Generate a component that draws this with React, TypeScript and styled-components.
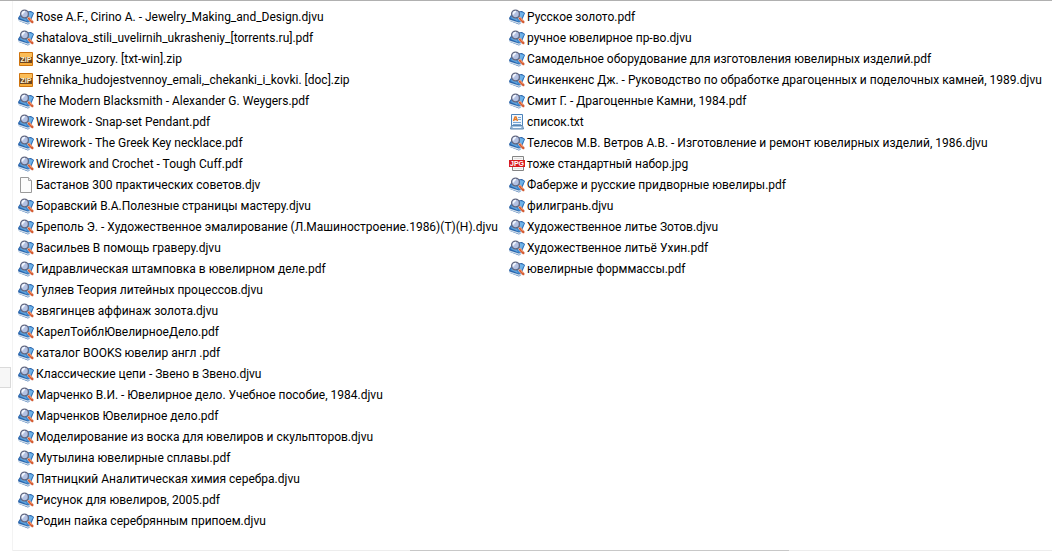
import React from "react";
import styled, { createGlobalStyle } from "styled-components";

const GlobalStyle = createGlobalStyle`
  * { box-sizing: border-box; }
  body { margin: 0; background: #fff; }
`;

const Window = styled.div`
  display: flex;
  min-height: 100vh;
  border-top: 1px solid #b0b0b0;
  background: #fff;
  color: #000;
  font: 12px/21px Roboto, "Open Sans", "Noto Sans", sans-serif;
`;

const NavEdge = styled.div`
  flex: none;
  width: 13px;
  padding-top: 366px;
  border-right: 1px solid #f3f3f3;
`;

const NavSelection = styled.div`
  width: 11px;
  height: 21px;
  border: 1px solid #dadada;
  border-left: 0;
  background: #f7f7f7;
`;

const Content = styled.main`
  flex: 1;
  min-width: 0;
  display: flex;
  flex-direction: column;
  justify-content: space-between;
`;

const Columns = styled.div`
  display: flex;
  padding: 6px 0 0 5px;
`;

const FileList = styled.ul`
  flex: none;
  width: 491px;
  margin: 0;
  padding: 0;
  list-style: none;
`;

const FileRow = styled.li`
  display: flex;
  align-items: flex-start;
  gap: 2px;
  height: 21px;
  white-space: nowrap;
`;

const Icon = styled.svg.attrs({ viewBox: "0 0 16 16", "aria-hidden": true })`
  flex: none;
  width: 16px;
  height: 16px;
  margin-top: 2px;
`;

const ScrollTrack = styled.div`
  display: flex;
  height: 1px;
  padding: 0 263px 0 397px;
  background: #ededed;
`;

const ScrollThumb = styled.div`
  flex: 1;
  background: #c8c8c8;
`;

type Kind = "book" | "zip" | "blank" | "txt" | "jpg";

const BookIcon = () => (
  <Icon>
    <path d="M0 9 4 3l9-1 3 2-4 10-2 1.500-9-3.500z" fill="#2a62a8" />
    <path d="m.500 10.500 9.500 3 2-1v1.200L10 15l-9-3z" fill="#cfdeec" />
    <path d="m1 9 3-5 9-1 2.500 1.500-4 8-1.500.500z" fill="#3c86cc" />
    <path d="m11 3 4 1-2.500 5-2-1z" fill="#6fb2e8" />
    <path d="m2 9 2-2 4 3 1 2z" fill="#63a6de" />
    <path d="m9 7.500 2 2" stroke="#6c6f80" strokeWidth="1.800" />
    <path d="m11 9.500 3.300 3.500" stroke="#f2dcd4" strokeWidth="3.200" strokeLinecap="round" />
    <path d="m11 9.500 3.300 3.500" stroke="#d4552b" strokeWidth="2.300" strokeLinecap="round" />
    <path d="m11.500 9.500 2.500 2.700" stroke="#f4a47a" strokeWidth=".8" />
    <circle cx="6.500" cy="5" r="3.900" fill="#b3c1e2" stroke="#62677f" strokeWidth="1.300" />
    <path d="M4.500 5.500a2.500 2.500 0 0 1 2.500-3" fill="none" stroke="#f3f7ff" strokeWidth="1.700" />
  </Icon>
);

const ZipIcon = () => (
  <Icon>
    <path d="M1.500 1.500h13v13h-13z" fill="#f6ac3b" stroke="#cf740f" />
    <path d="M2 2h12v4H2z" fill="#fbbd58" />
    <path d="M2 6h12v6H2z" fill="#6c4420" />
    <text x="8" y="11" textAnchor="middle" fontFamily="Liberation Sans, sans-serif" fontSize="7" fontWeight="700" fill="#fff3cf">ZIP</text>
  </Icon>
);

const BlankIcon = () => (
  <Icon>
    <path d="M2.500.500h8l3 3v12h-11z" fill="#fcfcfc" stroke="#9a9a9a" />
    <path d="M10.500.500v3h3" fill="#eee" stroke="#a5a5a5" />
  </Icon>
);

const TxtIcon = () => (
  <Icon>
    <path d="M2.500.500h11v11h-11z" fill="#eff7ff" stroke="#4c83ba" />
    <path d="M2.500 11.500h11l1 3.500h-13z" fill="#a5c4e2" stroke="#5e87af" />
    <path d="m4.500 7 1.500-4h1l1.500 4M5 5.500h3" fill="none" stroke="#e57b27" strokeWidth="1.400" />
    <path d="M9 3.500h3M9 5.500h3M4 8.500h8M4 10.500h8" stroke="#78a5d2" />
    <path d="M4 13.500h8" stroke="#f5faff" />
  </Icon>
);

const JpgIcon = () => (
  <Icon>
    <path d="M3.500.500h11v14h-11z" fill="#f7f7f7" stroke="#858585" />
    <path d="M5 2.500h8M5 12.500h8" stroke="#e2e2e2" />
    <path d="M0 4h16v7H0z" fill="#d81a1f" />
    <text x="8" y="10" textAnchor="middle" fontFamily="Liberation Sans, sans-serif" fontSize="7" fontWeight="700" fill="#fff">JPG</text>
  </Icon>
);

const icons: Record<Kind, React.FC> = {
  book: BookIcon,
  zip: ZipIcon,
  blank: BlankIcon,
  txt: TxtIcon,
  jpg: JpgIcon,
};

const kindOf = (name: string): Kind => {
  const ext = name.slice(name.lastIndexOf(".") + 1);
  if (ext === "zip") return "zip";
  if (ext === "djv") return "blank";
  if (ext === "txt") return "txt";
  if (ext === "jpg") return "jpg";
  return "book";
};

const columns: string[][] = [
  [
    "Rose A.F., Cirino A. - Jewelry_Making_and_Design.djvu",
    "shatalova_stili_uvelirnih_ukrasheniy_[torrents.ru].pdf",
    "Skannye_uzory. [txt-win].zip",
    "Tehnika_hudojestvennoy_emali,_chekanki_i_kovki. [doc].zip",
    "The Modern Blacksmith - Alexander G. Weygers.pdf",
    "Wirework - Snap-set Pendant.pdf",
    "Wirework - The Greek Key necklace.pdf",
    "Wirework and Crochet - Tough Cuff.pdf",
    "Бастанов 300 практических советов.djv",
    "Боравский В.А.Полезные страницы мастеру.djvu",
    "Бреполь Э. - Художественное эмалирование (Л.Машиностроение.1986)(Т)(Н).djvu",
    "Васильев В помощь граверу.djvu",
    "Гидравлическая штамповка в ювелирном деле.pdf",
    "Гуляев Теория литейных процессов.djvu",
    "звягинцев аффинаж золота.djvu",
    "КарелТойблЮвелирноеДело.pdf",
    "каталог BOOKS ювелир англ .pdf",
    "Классические цепи - Звено в Звено.djvu",
    "Марченко В.И. - Ювелирное дело. Учебное пособие, 1984.djvu",
    "Марченков Ювелирное дело.pdf",
    "Моделирование из воска для ювелиров и скульпторов.djvu",
    "Мутылина ювелирные сплавы.pdf",
    "Пятницкий Аналитическая химия серебра.djvu",
    "Рисунок для ювелиров, 2005.pdf",
    "Родин пайка серебрянным припоем.djvu",
  ],
  [
    "Русское золото.pdf",
    "ручное ювелирное пр-во.djvu",
    "Самодельное оборудование для изготовления ювелирных изделий.pdf",
    "Синкенкенс Дж. - Руководство по обработке драгоценных и поделочных камней, 1989.djvu",
    "Смит Г. - Драгоценные Камни, 1984.pdf",
    "список.txt",
    "Телесов М.В. Ветров А.В. - Изготовление и ремонт ювелирных изделий, 1986.djvu",
    "тоже стандартный набор.jpg",
    "Фаберже и русские придворные ювелиры.pdf",
    "филигрань.djvu",
    "Художественное литье Зотов.djvu",
    "Художественное литьё Ухин.pdf",
    "ювелирные форммассы.pdf",
  ],
];

const FileItem = ({ name }: { name: string }) => {
  const KindIcon = icons[kindOf(name)];
  return (
    <FileRow>
      <KindIcon />
      <span>{name}</span>
    </FileRow>
  );
};

export default function App() {
  return (
    <>
      <GlobalStyle />
      <Window>
        <NavEdge>
          <NavSelection />
        </NavEdge>
        <Content>
          <Columns>
            {columns.map((files, index) => (
              <FileList key={index}>
                {files.map((name) => (
                  <FileItem key={name} name={name} />
                ))}
              </FileList>
            ))}
          </Columns>
          <ScrollTrack>
            <ScrollThumb />
          </ScrollTrack>
        </Content>
      </Window>
    </>
  );
}
